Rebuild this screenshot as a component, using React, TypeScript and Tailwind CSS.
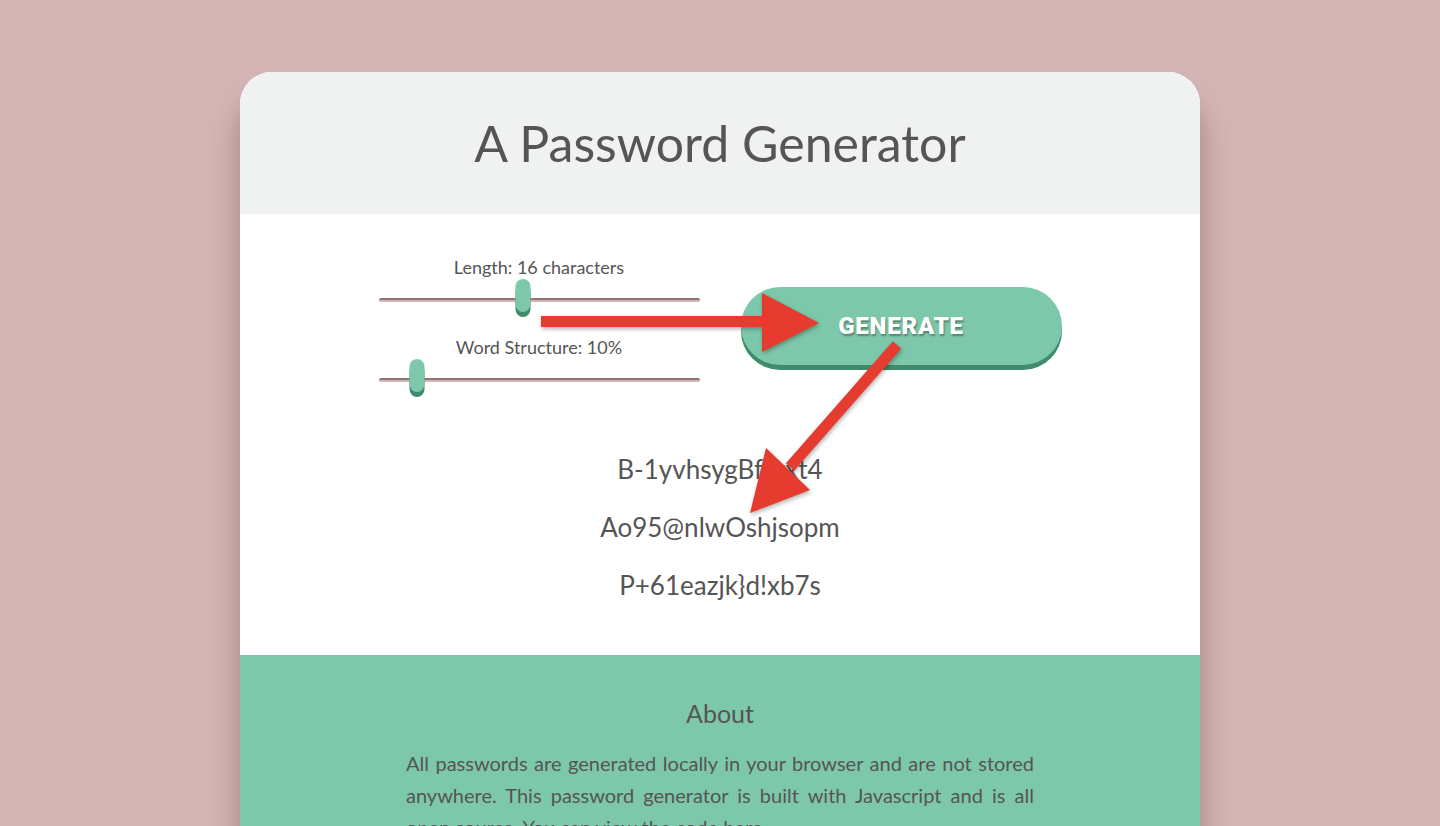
import React from "react";

function Slider({ label, pct }: { label: string; pct: number }) {
  return (
    <div className="flex flex-col items-center">
      <div className="text-[18px] leading-[20px] text-[#555]">{label}</div>
      <div className="relative mt-[21px] h-[4px] w-[321px]">
        <div className="h-[2px] w-full rounded-t-full bg-[#8c7777]" />
        <div className="h-[2px] w-full rounded-b-full bg-[#d3b2b2]" />
        <div
          className="absolute top-[-19px] h-[33px] w-[15px] -translate-x-1/2 rounded-full bg-[#7dc8aa] shadow-[0_5px_0_#418b6c]"
          style={{ left: `${pct}%` }}
        />
      </div>
    </div>
  );
}

export default function App() {
  return (
    <div className="relative min-h-[826px] overflow-hidden bg-[#d4b5b6] pt-[72px] font-['Lato','Noto_Sans',sans-serif]">
      <div className="mx-auto w-[960px] overflow-hidden rounded-t-[32px] bg-white shadow-[0_30px_30px_rgba(60,30,30,0.35)]">
        <header className="flex h-[142px] items-center justify-center bg-[#f0f2f1]">
          <h1 className="text-[50px] leading-none text-[#555]">A Password Generator</h1>
        </header>
        <section className="flex flex-col items-center pt-[43px] pb-[41px]">
          <div className="flex items-center gap-[41px]">
            <div className="flex flex-col gap-[35px] pb-[6px]">
              <Slider label="Length: 16 characters" pct={45} />
              <Slider label="Word Structure: 10%" pct={12} />
            </div>
            <button className="mt-[7px] h-[78px] w-[321px] rounded-full bg-[#7dc8aa] font-['Roboto',sans-serif] text-[24px] font-black tracking-[0.8px] text-white shadow-[0_5px_0_#418b6c] [text-shadow:1px_2px_2px_rgba(0,0,0,0.35)]">
              GENERATE
            </button>
          </div>
          <div className="mt-[52px] flex flex-col items-center text-[26px] leading-[58px] text-[#555]">
            <p>B-1yvhsygBfJkxt4</p>
            <p>Ao95@nlwOshjsopm</p>
            <p>{"P+61eazjk}d!xb7s"}</p>
          </div>
        </section>
        <section className="flex h-[200px] flex-col items-center bg-[#7dc8aa] pt-[43px]">
          <h2 className="text-[25px] leading-[30px] text-[#555]">About</h2>
          <p className="mt-[19px] w-[628px] text-justify text-[20px] leading-[32px] text-[#555]">
            All passwords are generated locally in your browser and are not stored anywhere. This password generator is built with Javascript and is all open source. You can view the code here.
          </p>
        </section>
      </div>
      <svg
        className="pointer-events-none absolute left-0 top-0"
        width="1440"
        height="826"
        style={{ filter: "drop-shadow(1px 2px 2px rgba(0,0,0,0.3))" }}
      >
        <rect x="541" y="316" width="224" height="11" fill="#e63c2f" />
        <polygon points="762,293 762,352 819,323" fill="#e63c2f" />
        <line x1="897" y1="345" x2="790" y2="467" stroke="#e63c2f" strokeWidth="11" />
        <polygon points="766,448 810,490 750,513" fill="#e63c2f" />
      </svg>
    </div>
  );
}
